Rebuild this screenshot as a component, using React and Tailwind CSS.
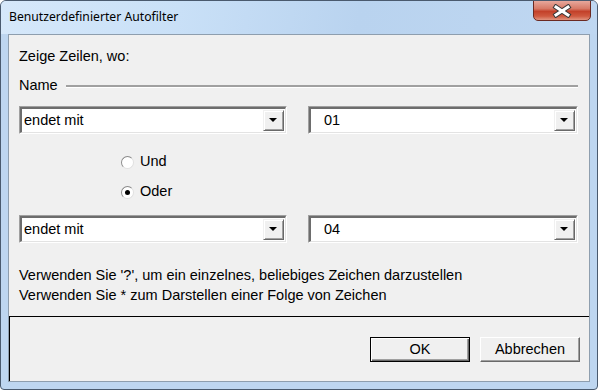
import React from 'react'

function Combo({ value, width, textPad }) {
  return (
    <div className={`${width} h-[28px] border border-t-[#a0a0a0] border-l-[#a0a0a0] border-b-white border-r-white`}>
      <div className="h-full flex items-stretch bg-white border-t-2 border-l-2 border-t-[#6d6d6d] border-l-[#6d6d6d] border-b border-r border-b-[#e3e3e3] border-r-[#e3e3e3]">
        <div className={`flex-1 flex items-center ${textPad} text-black`}>{value}</div>
        <div className="w-[21px] my-[1px] mr-[1px] flex items-center justify-center bg-[#f0f0f0] border border-t-[#f0f0f0] border-l-[#f0f0f0] border-b-[#696969] border-r-[#696969] shadow-[inset_1px_1px_0_#fff,inset_-1px_-1px_0_#a0a0a0]">
          <svg width="9" height="5" viewBox="0 0 9 5"><path d="M0 0h8l-4 4z" fill="#000" /></svg>
        </div>
      </div>
    </div>
  )
}

function Radio({ label, checked }) {
  return (
    <div className="flex items-center h-[16px] pl-[102px]">
      <div className="w-[13px] h-[13px] rounded-full bg-white border border-t-[#8a8a8a] border-l-[#8a8a8a] border-b-[#e0e0e0] border-r-[#e0e0e0] flex items-center justify-center">
        {checked && <div className="w-[5px] h-[5px] rounded-full bg-black" />}
      </div>
      <span className="ml-[6px] text-black">{label}</span>
    </div>
  )
}

export default function App() {
  return (
    <div className="w-[598px] h-[390px] flex flex-col bg-[#bed6f0] border border-[#4a5a6e] rounded-t-[6px] rounded-b-[4px] overflow-hidden" style={{ fontFamily: '"Liberation Sans", Arial, sans-serif' }}>
      {/* Title bar */}
      <div className="h-[33px] flex items-start justify-between bg-[linear-gradient(100deg,#d6e8fa_0%,#c9e0f7_30%,#b9d3ef_60%,#bfd7f1_100%)]">
        <span className="ml-[8px] mt-[7px] text-[12.2px] text-black" style={{ fontFamily: '"Noto Sans", "Open Sans", sans-serif' }}>
          Benutzerdefinierter Autofilter
        </span>
        <div className="mr-[6px] w-[58px] h-[21px] -mt-px rounded-b-[5px] border border-[#6b2a22] flex items-center justify-center bg-[linear-gradient(180deg,#e7a89c_0%,#d77a67_40%,#c3412a_55%,#cf5a40_80%,#e09480_100%)]">
          <svg width="20" height="14" viewBox="0 0 20 14">
            <path d="M4 3l12 8M16 3L4 11" stroke="#3b3b3b" strokeWidth="5" strokeLinecap="square" />
            <path d="M4 3l12 8M16 3L4 11" stroke="#fff" strokeWidth="3" strokeLinecap="square" />
          </svg>
        </div>
      </div>

      {/* Client area */}
      <div className="flex-1 mx-[7px] mb-[7px] flex flex-col bg-[#f0f0f0] border border-[#8e9eae] text-[14.5px]">
        <div className="h-[281px] flex flex-col px-[10px] text-black">
          <div className="mt-[13px] leading-[16px]">Zeige Zeilen, wo:</div>
          <div className="mt-[14px] h-[16px] flex items-center">
            <span>Name</span>
            <div className="ml-[8px] mr-[1px] flex-1 border-t-2 border-t-[#a0a0a0] border-b border-b-white" />
          </div>
          <div className="mt-[12px] flex justify-between pr-[1px]">
            <Combo value="endet mit" width="w-[268px]" textPad="pl-[2px]" />
            <Combo value="01" width="w-[270px]" textPad="pl-[13px]" />
          </div>
          <div className="mt-[20px]"><Radio label="Und" /></div>
          <div className="mt-[14px]"><Radio label="Oder" checked /></div>
          <div className="mt-[15px] flex justify-between pr-[1px]">
            <Combo value="endet mit" width="w-[268px]" textPad="pl-[2px]" />
            <Combo value="04" width="w-[270px]" textPad="pl-[13px]" />
          </div>
          <div className="mt-[22px] leading-[20px]">
            <div>Verwenden Sie '?', um ein einzelnes, beliebiges Zeichen darzustellen</div>
            <div>Verwenden Sie * zum Darstellen einer Folge von Zeichen</div>
          </div>
        </div>

        {/* Button pane */}
        <div className="flex-1 flex justify-end items-start gap-[10px] pt-[20px] pr-[9px] border-t border-l border-black">
          <button className="w-[100px] h-[25px] border border-black bg-[#f0f0f0] text-black shadow-[inset_1px_1px_0_#fff,inset_-1px_-1px_0_#696969,inset_-2px_-2px_0_#a0a0a0]">
            OK
          </button>
          <button className="w-[100px] h-[25px] bg-[#f0f0f0] text-black border border-t-white border-l-white border-b-[#696969] border-r-[#696969] shadow-[inset_-1px_-1px_0_#a0a0a0]">
            Abbrechen
          </button>
        </div>
      </div>
    </div>
  )
}
